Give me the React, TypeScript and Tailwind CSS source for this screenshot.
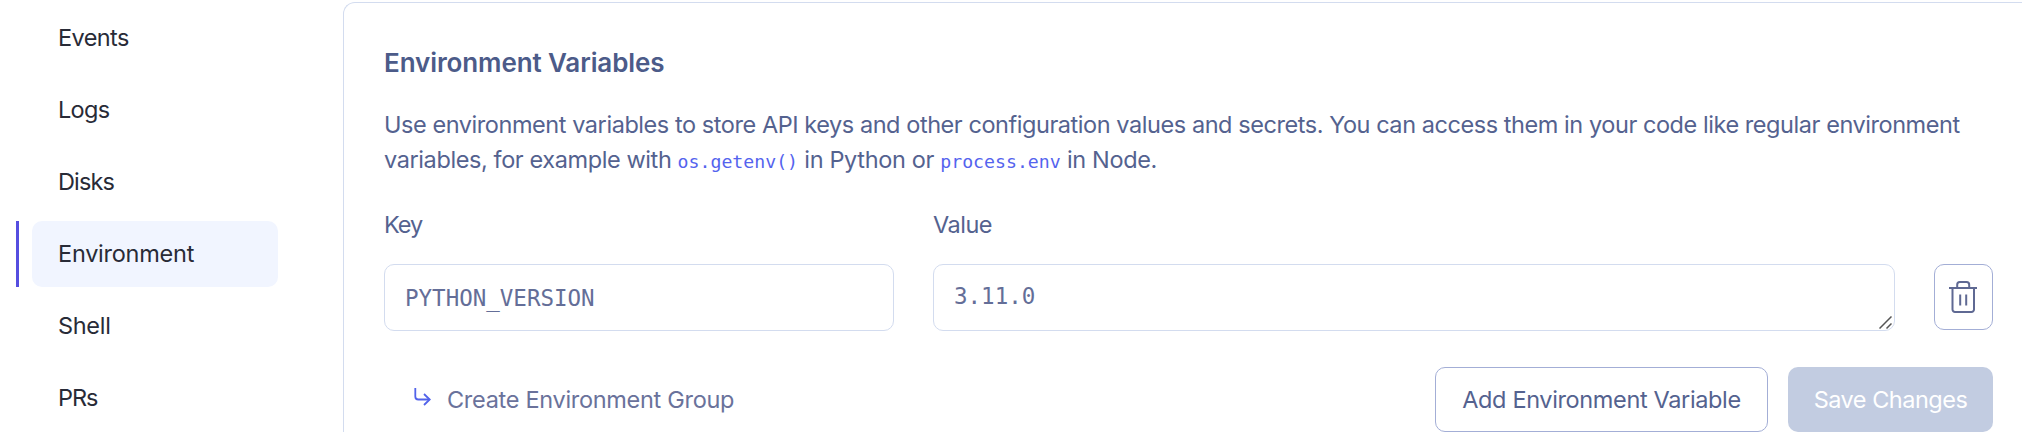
const navItems = [
  { label: "Events", tracking: "tracking-[-0.6px]" },
  { label: "Logs", tracking: "tracking-[-0.7px]" },
  { label: "Disks", tracking: "tracking-[-0.85px]" },
  { label: "Environment", tracking: "tracking-[-0.25px]" },
  { label: "Shell", tracking: "tracking-[-0.3px]" },
  { label: "PRs", tracking: "tracking-[-1.1px]" },
];

function NavItem({ label, tracking, active }: { label: string; tracking: string; active: boolean }) {
  return (
    <li className="flex h-[66px] items-stretch">
      <span className={active ? "w-[3px] bg-[#554ee0]" : "w-[3px]"} />
      <a
        className={
          "ml-[13px] flex w-[246px] items-center rounded-[10px] pb-[1px] pl-[26px] text-[#282b37] " +
          tracking +
          (active ? " bg-[#f1f5ff]" : "")
        }
      >
        {label}
      </a>
    </li>
  );
}

function TrashIcon() {
  return (
    <svg width="28" height="32" viewBox="0 0 28 32" fill="none" stroke="#5f6993" strokeWidth="2">
      <path d="M0 7h28" />
      <path d="M8.200 7V3.700A2.600 2.600 0 0 1 10.800 1.100h6.800A2.600 2.600 0 0 1 20.200 3.700V7" />
      <path d="M3.500 7v21.500a2.500 2.500 0 0 0 2.500 2.500h16.500a2.500 2.500 0 0 0 2.500-2.500V7" />
      <path d="M11.200 13.500v11M17.200 13.500v11" />
    </svg>
  );
}

function ArrowIcon() {
  return (
    <svg width="17" height="18" viewBox="0 0 17 18" fill="none" stroke="#5263ea" strokeWidth="1.800">
      <path d="M1.300 0v8.500a3 3 0 0 0 3 3H15.500" />
      <path d="M10 6l5.700 5.500L10 17" />
    </svg>
  );
}

export default function App() {
  return (
    <div className="flex h-[432px] w-[2022px] overflow-hidden bg-white font-['Inter',sans-serif] text-[23.5px] leading-[35px] font-normal text-[#54628f]">
      <nav className="w-[343px] shrink-0 pt-[5px] pl-4">
        <ul className="flex flex-col gap-[6px]">
          {navItems.map((item) => (
            <NavItem key={item.label} {...item} active={item.label === "Environment"} />
          ))}
        </ul>
      </nav>

      <main className="mt-[2px] h-[500px] w-[1720px] shrink-0 rounded-tl-[12px] border-t border-l border-[#d3dcef] pt-[42px] pl-10">
        <div className="w-[1609px]">
          <h2 className="text-[26px] font-semibold tracking-[-0.1px] text-[#4c5b89]">Environment Variables</h2>
          <p className="mt-[27px] tracking-[-0.44px] whitespace-nowrap">
            Use environment variables to store API keys and other configuration values and secrets. You can access
            them in your code like regular environment
            <br />
            <span className="tracking-[-0.4px]">variables, for example with </span>
            <code className="font-['DejaVu_Sans_Mono',monospace] text-[18.2px] leading-none tracking-normal text-[#5463ee]">
              os.getenv()
            </code>
            <span className="tracking-[-0.35px]"> in Python or </span>
            <code className="font-['DejaVu_Sans_Mono',monospace] text-[18.2px] leading-none tracking-normal text-[#5463ee]">
              process.env
            </code>
            <span className="tracking-[-0.35px]"> in Node.</span>
          </p>

          <div className="mt-[30px] flex items-end">
            <label className="w-[510px]">
              <span className="block tracking-[-1px]">Key</span>
              <span className="mt-[22px] flex h-[67px] items-center rounded-[10px] border border-[#d3dcef] pt-[1px] pl-5 font-['DejaVu_Sans_Mono',monospace] text-[22.5px] text-[#646e98]">
                PYTHON_VERSION
              </span>
            </label>
            <label className="ml-[39px] w-[962px]">
              <span className="block tracking-[-0.5px]">Value</span>
              <span className="relative mt-[22px] flex h-[67px] items-center rounded-[10px] border border-[#d3dcef] pb-[3px] pl-5 font-['DejaVu_Sans_Mono',monospace] text-[22.5px] text-[#646e98]">
                3.11.0
                <svg
                  className="absolute right-[2px] bottom-[1px]"
                  width="13"
                  height="13"
                  viewBox="0 0 13 13"
                  stroke="#555"
                  strokeWidth="1.5"
                >
                  <path d="M0.500 12.500L12.500 0.500M7.500 12.500L12.500 7.500" />
                </svg>
              </span>
            </label>
            <button className="mb-[1px] ml-[39px] flex h-[66px] w-[59px] items-center justify-center rounded-[10px] border border-[#a3aed6] pr-[1px]">
              <TrashIcon />
            </button>
          </div>

          <div className="mt-9 flex h-[65px] items-center">
            <a className="flex items-center pl-[30px] text-[#6a729b] tracking-[-0.3px]">
              <span className="mb-[6px]">
                <ArrowIcon />
              </span>
              <span className="ml-4">Create Environment Group</span>
            </a>
            <button className="ml-auto h-[65px] w-[333px] rounded-[10px] border border-[#a3aed6] tracking-[-0.36px]">
              Add Environment Variable
            </button>
            <button className="ml-5 h-[65px] w-[205px] rounded-[10px] bg-[#c2cce1] tracking-[-0.5px] text-white">
              Save Changes
            </button>
          </div>
        </div>
      </main>
    </div>
  );
}
